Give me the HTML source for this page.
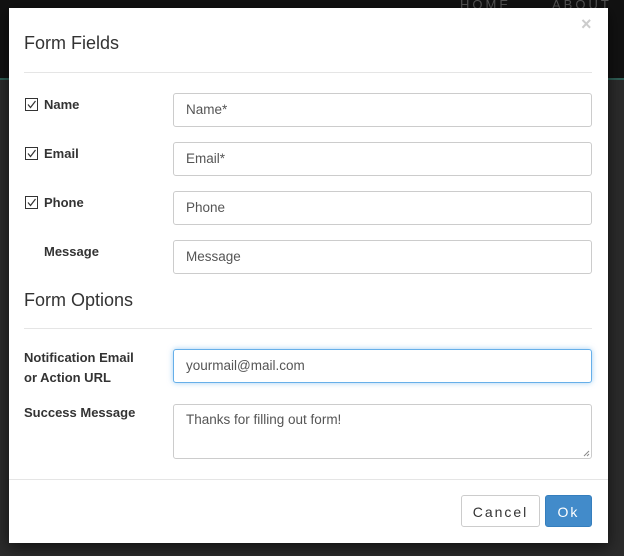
<!DOCTYPE html>
<html><head><style>
body{margin:0;width:624px;height:556px;background:#2b2b2b;position:relative;overflow:hidden;font-family:"Liberation Sans",sans-serif;}
.top{position:absolute;left:0;top:0;width:624px;height:78px;background:#121212;border-bottom:2px solid #2f5e55;}
.nav{position:absolute;top:-3px;color:#555;font-size:13px;letter-spacing:3px;}
.modal{position:absolute;left:9px;top:8px;width:599px;height:535px;background:#fff;box-shadow:0 4px 14px rgba(0,0,0,.6);}
.h{position:absolute;left:15px;font-size:18px;color:#333;}
.line{position:absolute;left:15px;width:568px;height:1px;background:#e5e5e5;}
.lbl{position:absolute;left:15px;font-size:13px;font-weight:bold;color:#333;line-height:20px;}
.cb{position:absolute;left:16px;width:11px;height:11px;border:1px solid #333;}
.cb svg{position:absolute;left:0;top:0;}
.in{position:absolute;left:164px;width:405px;height:32px;border:1px solid #ccc;border-radius:3px;font-size:13.5px;color:#555;line-height:32px;padding-left:12px;box-sizing:content-box;}
.btn{position:absolute;top:487px;height:32px;border-radius:3px;font-size:14px;letter-spacing:2px;line-height:32px;text-align:center;box-sizing:border-box;}
</style></head><body>
<div class="top"><span class="nav" style="left:460px">HOME</span><span class="nav" style="left:552px">ABOUT</span></div>
<div class="modal">
<div style="position:absolute;left:572px;top:6px;color:#ccc;font-size:18px;font-weight:bold">×</div>
<div class="h" style="top:25px">Form Fields</div>
<div class="line" style="top:64px"></div>
<div class="cb" style="top:90px"><svg width="11" height="11"><path d="M2 5.5L4.5 8.5L9.5 2" stroke="#333" fill="none" stroke-width="1.2"/></svg></div>
<div class="lbl" style="left:35px;top:87px">Name</div>
<div class="in" style="top:85px">Name*</div>
<div class="cb" style="top:139px"><svg width="11" height="11"><path d="M2 5.5L4.5 8.5L9.5 2" stroke="#333" fill="none" stroke-width="1.2"/></svg></div>
<div class="lbl" style="left:35px;top:136px">Email</div>
<div class="in" style="top:134px">Email*</div>
<div class="cb" style="top:188px"><svg width="11" height="11"><path d="M2 5.5L4.5 8.5L9.5 2" stroke="#333" fill="none" stroke-width="1.2"/></svg></div>
<div class="lbl" style="left:35px;top:185px">Phone</div>
<div class="in" style="top:183px">Phone</div>
<div class="lbl" style="left:35px;top:234px">Message</div>
<div class="in" style="top:232px">Message</div>
<div class="h" style="top:282px">Form Options</div>
<div class="line" style="top:320px"></div>
<div class="lbl" style="top:340px">Notification Email<br>or Action URL</div>
<div class="in" style="top:341px;border-color:#66afe9;box-shadow:0 0 6px rgba(102,175,233,.6)">yourmail@mail.com</div>
<div class="lbl" style="top:395px">Success Message</div>
<div class="in" style="top:396px;line-height:20px;padding-top:5px;height:48px">Thanks for filling out form!<svg style="position:absolute;right:1px;bottom:1px" width="7" height="7"><path d="M1 6L6 1M4 6L6 4" stroke="#888" stroke-width="1"/></svg></div>
<div style="position:absolute;left:0;top:471px;width:599px;height:1px;background:#e5e5e5"></div>
<div class="btn" style="left:452px;width:79px;border:1px solid #ccc;color:#333">Cancel</div>
<div class="btn" style="left:536px;width:47px;background:#428bca;border:1px solid #357ebd;color:#fff">Ok</div>
</div>
</body></html>
